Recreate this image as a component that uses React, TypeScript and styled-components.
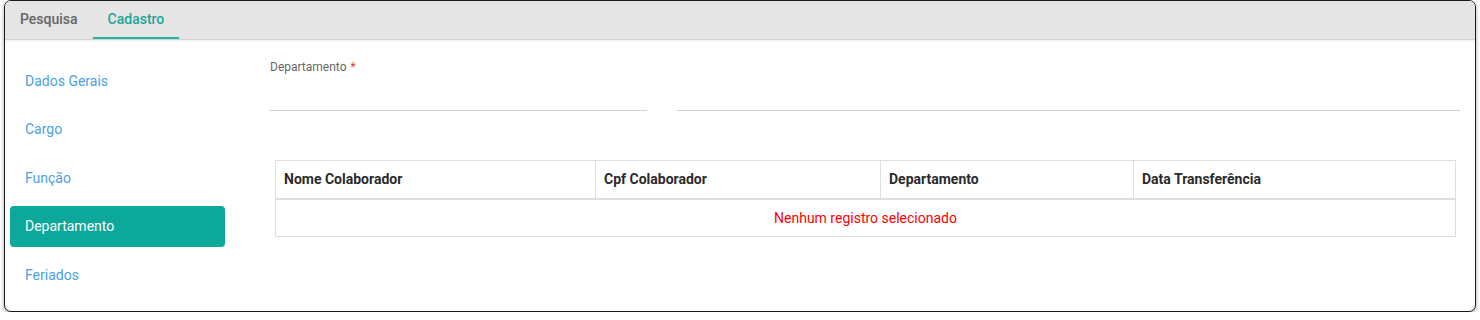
import styled, { createGlobalStyle } from "styled-components";

const GlobalStyle = createGlobalStyle`
  body {
    margin: 0;
    background: #ffffff;
    font-family: Roboto, "Liberation Sans", sans-serif;
  }
`;

const Page = styled.div`
  padding: 0 4px 0 4px;
`;

const Frame = styled.div`
  height: 310px;
  border: 1px solid #1a1a1a;
  border-radius: 7px;
  box-shadow: 0 2px 4px rgba(0, 0, 0, 0.35);
  overflow: hidden;
  background: #fff;
`;

const TabBar = styled.div`
  display: flex;
  height: 38px;
  background: #e4e5e4;
  border-bottom: 1px solid #d2d3d2;
  box-shadow: 0 1px 2px rgba(0, 0, 0, 0.08);
`;

const Tab = styled.div<{ $active?: boolean }>`
  display: flex;
  align-items: center;
  padding: 0 15px 1px 15px;
  font-size: 14px;
  font-weight: 500;
  color: ${(p) => (p.$active ? "#1fa597" : "#666")};
  border-bottom: 2px solid ${(p) => (p.$active ? "#1fb3a4" : "transparent")};
  box-sizing: border-box;
  height: 38px;
`;

const Body = styled.div`
  display: flex;
`;

const Sidebar = styled.div`
  flex: 0 0 215px;
  padding: 20px 0 0 5px;
  display: flex;
  flex-direction: column;
  gap: 7.5px;
`;

const NavItem = styled.div<{ $active?: boolean }>`
  height: 41px;
  display: flex;
  align-items: center;
  padding-left: 15px;
  border-radius: 4px;
  font-size: 14px;
  color: ${(p) => (p.$active ? "#ffffff" : "#4aa2e0")};
  background: ${(p) => (p.$active ? "#0ca89a" : "transparent")};
`;

const Main = styled.div`
  flex: 1;
  min-width: 0;
  padding: 20px 15px 0 45px;
`;

const FormRow = styled.div`
  display: grid;
  grid-template-columns: 377px 1fr;
  gap: 30px;
`;

const Field = styled.div`
  display: flex;
  flex-direction: column;
  justify-content: flex-end;
`;

const Label = styled.label`
  font-size: 12px;
  line-height: 14px;
  color: #666;
`;

const Required = styled.span`
  color: #e53935;
  margin-left: 4px;
`;

const Underline = styled.div`
  height: 36px;
  border-bottom: 1px solid #cfcfcf;
`;

const Table = styled.table`
  margin: 49px 5px 0 5px;
  width: calc(100% - 10px);
  border-collapse: collapse;
  font-size: 14px;
  table-layout: fixed;
`;

const Th = styled.th<{ $w: number }>`
  box-sizing: border-box;
  width: ${(p) => p.$w}px;
  height: 38px;
  text-align: left;
  padding: 0 8px;
  font-weight: 700;
  color: #2b2b2b;
  border: 1px solid #dedede;
  border-bottom: 2px solid #dedede;
`;

const EmptyCell = styled.td`
  box-sizing: border-box;
  height: 38px;
  padding: 0;
  text-align: center;
  color: #f00;
  border: 1px solid #dedede;
`;

const columns = [
  { title: "Nome Colaborador", w: 320 },
  { title: "Cpf Colaborador", w: 285 },
  { title: "Departamento", w: 253 },
  { title: "Data Transferência", w: 322 },
];

const menu = ["Dados Gerais", "Cargo", "Função", "Departamento", "Feriados"];

export default function App() {
  return (
    <Page>
      <GlobalStyle />
      <Frame>
        <TabBar>
          <Tab>Pesquisa</Tab>
          <Tab $active>Cadastro</Tab>
        </TabBar>
        <Body>
          <Sidebar>
            {menu.map((m) => (
              <NavItem key={m} $active={m === "Departamento"}>
                {m}
              </NavItem>
            ))}
          </Sidebar>
          <Main>
            <FormRow>
              <Field>
                <Label>
                  Departamento<Required>*</Required>
                </Label>
                <Underline />
              </Field>
              <Field>
                <Underline />
              </Field>
            </FormRow>
            <Table>
              <thead>
                <tr>
                  {columns.map((c) => (
                    <Th key={c.title} $w={c.w}>
                      {c.title}
                    </Th>
                  ))}
                </tr>
              </thead>
              <tbody>
                <tr>
                  <EmptyCell colSpan={4}>Nenhum registro selecionado</EmptyCell>
                </tr>
              </tbody>
            </Table>
          </Main>
        </Body>
      </Frame>
    </Page>
  );
}
